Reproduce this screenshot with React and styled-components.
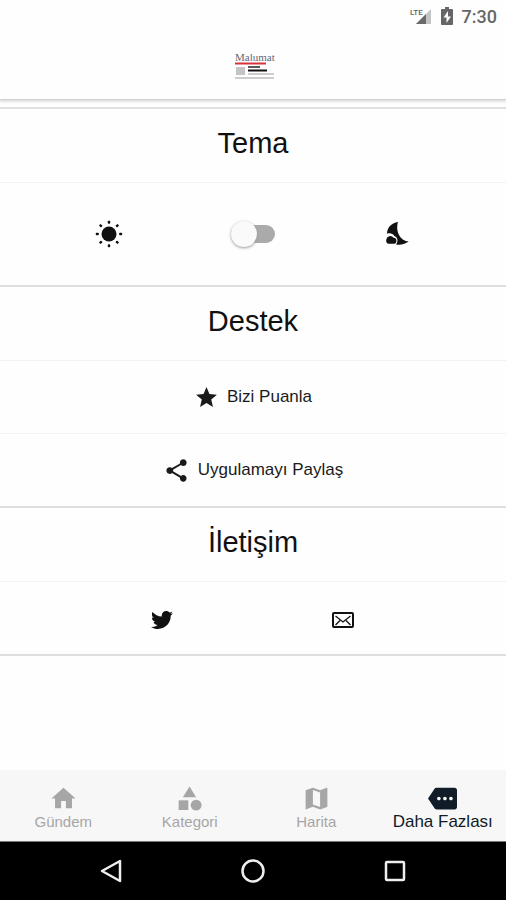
import React, { useState } from "react";
import styled, { createGlobalStyle } from "styled-components";
import {
  MdHome,
  MdCategory,
  MdMap,
  MdMore,
  MdShare,
  MdStar,
} from "react-icons/md";
import { FaTwitter } from "react-icons/fa";

const GlobalStyle = createGlobalStyle`
  * {
    box-sizing: border-box;
  }
  body {
    margin: 0;
    background: #fefefe;
    color: #111;
    font-family: "Liberation Sans", Arial, sans-serif;
  }
`;

const tabs = [
  { id: "gundem", label: "Gündem", Icon: MdHome },
  { id: "kategori", label: "Kategori", Icon: MdCategory },
  { id: "harita", label: "Harita", Icon: MdMap },
  { id: "daha", label: "Daha Fazlası", Icon: MdMore },
];

const rays = [0, 45, 90, 135, 180, 225, 270, 315];

function SignalIcon() {
  return (
    <svg width="22" height="18" viewBox="0 0 22 18" aria-hidden="true">
      <path d="M21 2v15H6z" fill="#c4c4c4" />
      <path d="M16 7v10H6z" fill="#6a6a6a" />
      <path d="M0 0h13v9H0z" fill="#fefefe" />
      <text
        x="0"
        y="8"
        fontSize="8"
        fontWeight="500"
        fontFamily="Roboto, sans-serif"
        fill="#666"
      >
        LTE
      </text>
    </svg>
  );
}

function BatteryIcon() {
  return (
    <svg width="12" height="18" viewBox="0 0 12 18" aria-hidden="true">
      <path d="M4 0h4v2h3q1 0 1 1v14q0 1-1 1H1q-1 0-1-1V3q0-1 1-1h3z" fill="#666" />
      <path d="M7 4 2.500 10.500h3V16l4.500-6.500H7z" fill="#fefefe" />
    </svg>
  );
}

function NewsLogo() {
  return (
    <svg width="44" height="28" viewBox="-4 0 44 28" role="img" aria-label="Malumat">
      <text x="0" y="9" fontSize="11" fontFamily="Liberation Serif, serif" fill="#667">
        Malumat
      </text>
      <path d="M0 11.500h31" stroke="#d8323c" strokeWidth="2" />
      <path d="M1 15h9v8H1z" fill="#c4c4c4" />
      <path d="M13 15h12" stroke="#222" strokeWidth="1.500" />
      <path d="M13 18.500h19" stroke="#111" strokeWidth="2" />
      <path d="M13 22h26M0 26h39" stroke="#bdbdbd" strokeWidth="1.500" />
    </svg>
  );
}

function SunIcon() {
  return (
    <svg width="28" height="28" viewBox="0 0 28 28" fill="#111" aria-hidden="true">
      <circle cx="14" cy="14" r="7.500" />
      {rays.map((angle) => (
        <rect
          key={angle}
          x="12.800"
          y="0.800"
          width="2.400"
          height="3"
          rx="0.800"
          transform={`rotate(${angle} 14 14)`}
        />
      ))}
    </svg>
  );
}

function MoonIcon() {
  return (
    <svg width="24" height="26" viewBox="0 0 24 26" fill="#111" aria-hidden="true">
      <path d="M13 1C6 2 2 7 2 12.800 4.500 11.800 8 12.300 9.300 15c3 .7 4.500 5 1.700 8.500 4.500 1 9.500-.5 12.700-3.200C16 20.500 10 11 13 1z" />
      <path d="M3.700 22.800h4.600a3 3 0 0 0 .2-6 4 4 0 0 0-7.200 1.700c-.6 2.300.7 4.300 2.400 4.300z" />
    </svg>
  );
}

function MailIcon() {
  return (
    <svg
      width="24"
      height="18"
      viewBox="0 0 24 18"
      fill="none"
      stroke="#111"
      aria-hidden="true"
    >
      <rect x="2" y="2" width="20" height="14" rx="1" strokeWidth="2" />
      <path d="m4.500 5 7.500 6 7.500-6M4.500 14l4.500-4.500M19.500 14 15 9.500" strokeWidth="1.300" />
    </svg>
  );
}

function App() {
  const [dark, setDark] = useState(false);
  const [active, setActive] = useState("daha");

  return (
    <>
      <GlobalStyle />
      <Page>
        <StatusBar>
          <SignalIcon />
          <BatteryIcon />
          <Clock>7:30</Clock>
        </StatusBar>
        <Header>
          <NewsLogo />
        </Header>

        <Content>
          <Section>
            <Title>Tema</Title>
            <Row $size="large">
              <Cell>
                <SunIcon />
              </Cell>
              <Cell>
                <Toggle
                  type="checkbox"
                  role="switch"
                  aria-label="Koyu tema"
                  checked={dark}
                  onChange={(e) => setDark(e.target.checked)}
                />
              </Cell>
              <Cell>
                <MoonIcon />
              </Cell>
            </Row>
          </Section>

          <Section>
            <Title>Destek</Title>
            <Row as="button" type="button">
              <MdStar size={25} />
              Bizi Puanla
            </Row>
            <Row as="button" type="button">
              <MdShare size={27} />
              Uygulamayı Paylaş
            </Row>
          </Section>

          <Section>
            <Title>İletişim</Title>
            <Contacts>
              <IconLink href="#twitter" aria-label="Twitter">
                <FaTwitter size={22} />
              </IconLink>
              <IconLink href="#mail" aria-label="E-posta">
                <MailIcon />
              </IconLink>
            </Contacts>
          </Section>
        </Content>

        <TabBar>
          {tabs.map(({ id, label, Icon }) => (
            <Tab
              key={id}
              type="button"
              $active={active === id}
              onClick={() => setActive(id)}
            >
              <Icon />
              {label}
            </Tab>
          ))}
        </TabBar>

        <SystemNav>
          <SystemButton type="button" aria-label="Geri">
            <svg width="24" height="26" viewBox="0 0 24 26">
              <path d="M21 3v20L3 13z" />
            </svg>
          </SystemButton>
          <SystemButton type="button" aria-label="Ana ekran">
            <svg width="26" height="26" viewBox="0 0 26 26">
              <circle cx="13" cy="13" r="10.500" />
            </svg>
          </SystemButton>
          <SystemButton type="button" aria-label="Son uygulamalar">
            <svg width="24" height="24" viewBox="0 0 24 24">
              <rect x="3" y="3" width="18" height="18" rx="1" />
            </svg>
          </SystemButton>
        </SystemNav>
      </Page>
    </>
  );
}

const Page = styled.div`
  min-height: 100vh;
  display: flex;
  flex-direction: column;
`;

const StatusBar = styled.div`
  height: 32px;
  padding: 0 9px;
  display: flex;
  justify-content: flex-end;
  align-items: center;
  gap: 9px;
`;

const Clock = styled.span`
  font-family: Roboto, sans-serif;
  font-size: 18px;
  font-weight: 500;
  color: #666;
`;

const Header = styled.header`
  height: 68px;
  display: flex;
  justify-content: center;
  align-items: center;
  border-bottom: 1px solid #d0d0d0;
  box-shadow: 0 2px 2px #e0e0e0;
`;

const Content = styled.main`
  flex: 1;
  margin-top: 7px;
  border-top: 2px solid #e0e0e0;
`;

const Section = styled.section`
  border-bottom: 2px solid #dedede;
`;

const Title = styled.h2`
  margin: 0;
  height: 73px;
  padding-bottom: 4px;
  display: flex;
  justify-content: center;
  align-items: center;
  font-size: 29px;
  font-weight: 400;
`;

const Row = styled.div`
  width: 100%;
  height: ${({ $size }) => ($size === "large" ? "103px" : "73px")};
  padding: 0;
  display: flex;
  justify-content: center;
  align-items: center;
  gap: 8px;
  background: none;
  border: none;
  border-top: 1px solid #f2f2f2;
  color: #1a1a1a;
  font-family: inherit;
  font-size: 17px;
`;

const Cell = styled.div`
  width: 136px;
  display: flex;
  justify-content: center;
`;

const Toggle = styled.input`
  appearance: none;
  width: 44px;
  height: 18px;
  margin: 0;
  display: flex;
  align-items: center;
  background: #aaa;
  border-radius: 9px;
  cursor: pointer;

  &::before {
    content: "";
    flex: none;
    width: 26px;
    height: 26px;
    border-radius: 50%;
    background: #fafafa;
    box-shadow: 0 1px 3px #999;
  }
  &:checked {
    justify-content: flex-end;
  }
`;

const Contacts = styled(Row)`
  padding-top: 4px;
  justify-content: space-evenly;
`;

const IconLink = styled.a`
  display: flex;
  color: #111;
`;

const TabBar = styled.nav`
  height: 71px;
  display: grid;
  grid-template-columns: repeat(4, 1fr);
  background: #f7f7f7;
`;

const Tab = styled.button`
  padding: 4px 0 0;
  display: flex;
  flex-direction: column;
  align-items: center;
  justify-content: center;
  background: none;
  border: none;
  color: ${({ $active }) => ($active ? "#101c28" : "#a6a6a6")};
  font-family: inherit;
  font-size: ${({ $active }) => ($active ? "17px" : "15px")};
  line-height: 18px;
  white-space: nowrap;
  cursor: pointer;

  svg {
    width: 29px;
    height: 29px;
  }
`;

const SystemNav = styled.nav`
  height: 59px;
  padding: 0 40px;
  display: grid;
  grid-template-columns: repeat(3, 1fr);
  background: #000;
  border-top: 1px solid #777;
`;

const SystemButton = styled.button`
  padding: 0;
  display: flex;
  justify-content: center;
  align-items: center;
  background: none;
  border: none;

  svg {
    fill: none;
    stroke: #eee;
    stroke-width: 2.5;
    stroke-linejoin: round;
  }
`;

export default App;
